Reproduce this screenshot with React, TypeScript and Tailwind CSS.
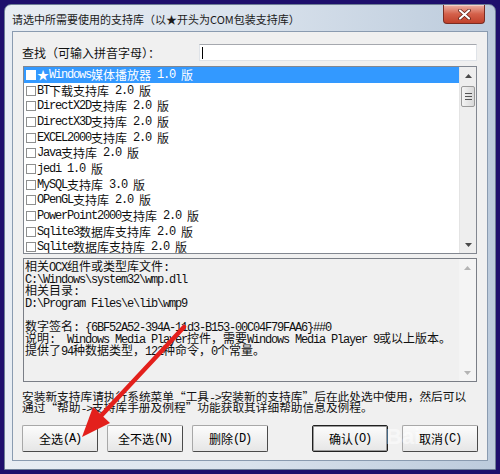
import React from "react";

const ASCII = /^[\x20-\x7e]+$/;
function Mix({ t }: { t: string }) {
  return (
    <>
      {t
        .split(/([\x20-\x7e]+|[“”])/)
        .filter((s) => s.length > 0)
        .map((s, i) =>
          s === "“" ? (
            <span key={i} className="inline-block w-[1em] text-right">{s}</span>
          ) : s === "”" ? (
            <span key={i} className="inline-block w-[1em] text-left">{s}</span>
          ) : ASCII.test(s) ? (
            <span key={i} className="font-['Liberation_Mono',monospace] tracking-[-1.2px]">
              {s}
            </span>
          ) : (
            <span key={i}>{s}</span>
          )
        )}
    </>
  );
}

function Tri({ up, color }: { up: boolean; color: string }) {
  return (
    <svg width="7" height="4" viewBox="0 0 7 4">
      <path d={up ? "M0 4 L3.5 0 L7 4Z" : "M0 0 L3.5 4 L7 0Z"} fill={color} />
    </svg>
  );
}

const items = [
  "BT下载支持库 2.0 版",
  "DirectX2D支持库 2.0 版",
  "DirectX3D支持库 2.0 版",
  "EXCEL2000支持库 2.0 版",
  "Java支持库 2.0 版",
  "jedi 1.0 版",
  "MySQL支持库 3.0 版",
  "OPenGL支持库 2.0 版",
  "PowerPoint2000支持库 2.0 版",
  "Sqlite3数据库支持库 2.0 版",
  "Sqlite数据库支持库 2.0 版",
];

const details = [
  "相关OCX组件或类型库文件:",
  "C:\\Windows\\system32\\wmp.dll",
  "相关目录:",
  "D:\\Program Files\\e\\lib\\wmp9",
  "",
  "数字签名: {6BF52A52-394A-11d3-B153-00C04F79FAA6}##0",
  "说明:  Windows Media Player控件，需要Windows Media Player 9或以上版本。",
  "提供了94种数据类型，122种命令，0个常量。",
];

function Btn({ label, def }: { label: string; def?: boolean }) {
  return (
    <div
      className={
        "w-[76px] h-[27px] flex items-center justify-center rounded-[2px] bg-linear-to-b from-[#fcfcfc] to-[#e6e6e6] text-[12px] leading-[12px] whitespace-pre border " +
        (def
          ? "border-[#202020] shadow-[inset_0_0_0_1px_#9a9a9a]"
          : "border-[#a8a8a8] border-r-[#4a4a4a] border-b-[#4a4a4a]")
      }
    >
      <Mix t={label} />
    </div>
  );
}

export default function App() {
  return (
    <div className="relative w-[500px] h-[474px] overflow-hidden bg-[#1e0f6c] pt-[4px] pl-[4px] font-['Noto_Sans_CJK_SC',sans-serif] text-black">
      <div className="w-[492px] h-[466px] rounded-t-[7px] border border-[#6d7e96] bg-linear-to-r from-[#e8edf3] via-[#d9e2ec] to-[#bccbdc] flex flex-col">
        {/* title bar */}
        <div className="h-[26px] shrink-0 flex items-start justify-between">
          <span className="ml-[7px] mt-[8px] text-[11px] leading-[12px] text-[#1b1b1b] whitespace-nowrap">
            请选中所需要使用的支持库（以★开头为COM包装支持库）
          </span>
          <div className="mr-[10px] w-[42px] h-[19px] rounded-b-[4px] border border-t-0 border-[#7a2c22] bg-linear-to-b from-[#eab1a5] via-[#d4604a] to-[#c0402a] flex items-center justify-center shadow-[inset_0_1px_0_#f6d0c8]">
            <svg width="13" height="11" viewBox="0 0 13 11">
              <path d="M2 1.5 L11 9.5 M11 1.5 L2 9.5" stroke="#5a1a12" strokeWidth="3.6" strokeLinecap="round" />
              <path d="M2 1.5 L11 9.5 M11 1.5 L2 9.5" stroke="#ffffff" strokeWidth="2.2" strokeLinecap="round" />
            </svg>
          </div>
        </div>

        {/* client area */}
        <div className="mx-[7px] h-[430px] border border-[#8a9bb0] bg-[#f0f0f0] flex flex-col">
          {/* search row */}
          <div className="mt-[12px] h-[17px] flex items-center">
            <span className="pl-[9px] text-[12px] leading-[12px] text-[#111] whitespace-nowrap">查找（可输入拼音字母）：</span>
            <div className="ml-auto mr-[10px] w-[278px] h-[17px] bg-white border border-[#dfe3e8] border-t-[#a5a8ae] flex items-center">
              <div className="ml-[2px] w-[1px] h-[12px] bg-black" />
            </div>
          </div>

          {/* list */}
          <div className="mt-[5px] mx-[10px] h-[188px] border border-[#828790] bg-white flex overflow-hidden">
            <div className="flex-1 flex flex-col overflow-hidden text-[12px]">
              <div className="h-[15.7px] shrink-0 flex items-center pl-[2px] bg-[#3399ff] text-white whitespace-pre leading-[12px]">
                <div className="w-[10px] h-[10px] bg-white mr-[1px]" />
                <Mix t="★Windows媒体播放器 1.0 版" />
              </div>
              {items.map((it) => (
                <div key={it} className="h-[15.7px] shrink-0 flex items-center pl-[2px] whitespace-pre leading-[12px] text-[#111]">
                  <div className="w-[10px] h-[10px] border border-[#8e8f8f] bg-white mr-[1px]" />
                  <Mix t={it} />
                </div>
              ))}
            </div>
            <div className="w-[17px] shrink-0 bg-[#eeeeee] border-l border-[#e4e4e4] flex flex-col">
              <div className="h-[17px] flex items-center justify-center">
                <Tri up color="#4a4a4a" />
              </div>
              <div className="mt-[2px] mx-[1px] h-[21px] rounded-[2px] border border-[#9a9a9a] bg-linear-to-r from-[#f4f4f4] to-[#d9d9d9] flex flex-col items-center justify-center gap-[2px]">
                <div className="w-[7px] h-[1px] bg-[#555]" />
                <div className="w-[7px] h-[1px] bg-[#555]" />
                <div className="w-[7px] h-[1px] bg-[#555]" />
              </div>
              <div className="flex-1" />
              <div className="h-[17px] flex items-center justify-center">
                <Tri up={false} color="#4a4a4a" />
              </div>
            </div>
          </div>

          {/* detail box */}
          <div className="mt-[4px] mx-[10px] h-[124px] border border-[#7a7e86] bg-[#f0f0f0] flex overflow-hidden">
            <div className="flex-1 pl-[1px] pt-[1px] flex flex-col text-[12px] leading-[12px] text-[#111]">
              {details.map((d, i) => (
                <div key={i} className="h-[12px] whitespace-pre">
                  <Mix t={d} />
                </div>
              ))}
            </div>
            <div className="w-[17px] shrink-0 bg-[#f4f4f4] flex flex-col">
              <div className="h-[17px] flex items-center justify-center">
                <Tri up color="#b4b4b4" />
              </div>
              <div className="flex-1" />
              <div className="h-[17px] flex items-center justify-center">
                <Tri up={false} color="#b4b4b4" />
              </div>
            </div>
          </div>

          {/* hint text */}
          <div className="mt-[8px] pl-[9px] text-[11.7px] leading-[11px] text-[#111] whitespace-pre">
            <div className="h-[11px]">
              <Mix t="安装新支持库请执行系统菜单“工具->安装新的支持库”后在此处选中使用，然后可以" />
            </div>
            <div className="h-[11px]">
              <Mix t="通过“帮助->支持库手册及例程”功能获取其详细帮助信息及例程。" />
            </div>
          </div>

          {/* buttons */}
          <div className="mt-[13px] flex pl-[9px] pr-[9px]">
            <div className="flex gap-[9px]">
              <Btn label="全选(A)" />
              <Btn label="全不选(N)" />
              <Btn label="删除(D)" />
            </div>
            <div className="ml-auto flex gap-[14px]">
              <Btn label="确认(O)" def />
              <Btn label="取消(C)" />
            </div>
          </div>
        </div>
      </div>

      {/* watermark */}
      <div className="absolute left-[386px] top-[426px] text-[22px] leading-[22px] font-['Liberation_Sans',sans-serif] font-bold text-white opacity-50 pointer-events-none">
        Bai
      </div>

      {/* red arrow */}
      <svg className="absolute left-0 top-0 pointer-events-none" width="500" height="474" viewBox="0 0 500 474">
        <line x1="184" y1="327" x2="99" y2="418" stroke="#e3201c" strokeWidth="4.5" strokeLinecap="round" />
        <polygon points="82,437 110,423 93,407" fill="#e3201c" />
      </svg>
    </div>
  );
}
